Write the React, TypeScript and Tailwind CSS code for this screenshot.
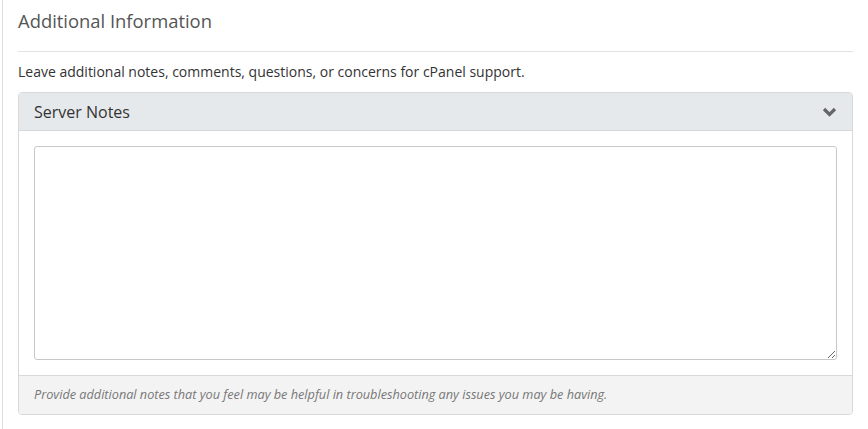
export default function App() {
  return (
    <div className="h-[429px] bg-white font-['Open_Sans',sans-serif] overflow-hidden">
      <div className="ml-[2px] h-full border-l border-[#dcdcdc] px-[15px]">
        <h2 className="pt-[9px] pb-[18px] text-[18.4px] leading-[24px] text-[#555] border-b border-[#e2e2e2]">
          Additional Information
        </h2>
        <p className="mt-[10px] mb-[10px] text-[14px] leading-[20px] text-[#333]">
          Leave additional notes, comments, questions, or concerns for cPanel support.
        </p>
        <div className="rounded-[4px] border border-[#d8d8d8] overflow-hidden">
          <div className="flex h-[38px] items-center justify-between border-b border-[#d8d8d8] bg-[#e6e9eb] pl-[15px] pr-[15px]">
            <span className="text-[16px] font-medium text-[#333]">Server Notes</span>
            <svg width="15" height="10" viewBox="0 0 15 10" className="mt-[1px]">
              <path d="M2 2 L7.5 7.5 L13 2" fill="none" stroke="#666" strokeWidth="3.2" />
            </svg>
          </div>
          <div className="p-[15px]">
            <textarea className="block h-[214px] w-full rounded-[3px] border border-[#c8c8c8] outline-none" />
          </div>
          <div className="flex h-[39px] items-center border-t border-[#d8d8d8] bg-[#f3f3f3] px-[15px]">
            <span className="text-[12.7px] italic text-[#777]">
              Provide additional notes that you feel may be helpful in troubleshooting any issues you may be having.
            </span>
          </div>
        </div>
      </div>
    </div>
  );
}
